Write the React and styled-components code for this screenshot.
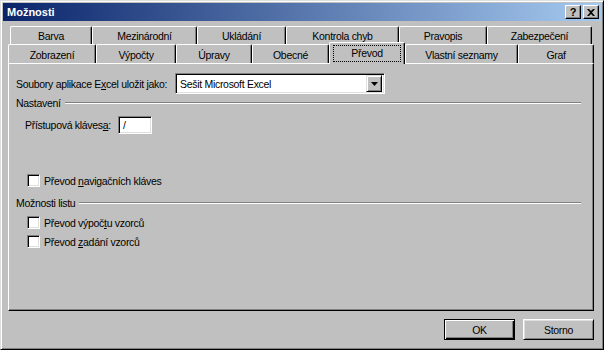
import React from 'react'
import styled, { createGlobalStyle } from 'styled-components'

const GlobalStyle = createGlobalStyle`
  html, body {
    margin: 0;
    padding: 0;
    width: 604px;
    height: 350px;
    overflow: hidden;
    background: #c0c0c0;
  }
  * { box-sizing: border-box; }
`

const Window = styled.div`
  width: 604px;
  height: 350px;
  display: flex;
  flex-direction: column;
  background: #c0c0c0;
  border: 1px solid;
  border-color: #dfdfdf #000 #000 #dfdfdf;
  box-shadow: inset 1px 1px #fff, inset -1px -1px #808080;
  padding: 1px;
  font-family: Tahoma, "Liberation Sans", Arial, sans-serif;
  font-size: 10.5px;
  letter-spacing: -0.3px;
  color: #000;
`

const TitleBar = styled.div`
  height: 18px;
  margin: 1px 1px 0 1px;
  display: flex;
  align-items: center;
  justify-content: space-between;
  padding: 0 2px 0 4px;
  background: linear-gradient(to right, #0a246a, #a6caf0);
  color: #fff;
  font-weight: bold;
  font-size: 11px;
  letter-spacing: 0;
`

const TitleButtons = styled.div`
  display: flex;
  gap: 2px;
`

const TitleButton = styled.div`
  width: 16px;
  height: 14px;
  background: #c0c0c0;
  border: 1px solid;
  border-color: #fff #000 #000 #fff;
  box-shadow: inset -1px -1px #808080;
  display: flex;
  align-items: center;
  justify-content: center;
  color: #000;
  font-weight: bold;
  font-size: 11px;
  line-height: 1;
`

const Body = styled.div`
  flex: 1;
  display: flex;
  flex-direction: column;
  padding: 5px 8px 8px 6px;
`

const TabRow = styled.div`
  display: flex;
  align-items: flex-end;
  height: ${p => p.$h}px;
  margin-left: ${p => p.$indent}px;
  position: relative;
  z-index: ${p => p.$front ? 2 : 1};
`

const Tab = styled.div`
  width: ${p => p.$w}px;
  height: ${p => p.$active ? p.$h + 3 : p.$h}px;
  margin-bottom: ${p => p.$active ? -1 : 0}px;
  position: relative;
  background: #c0c0c0;
  border-left: 1px solid #fff;
  border-top: 1px solid #fff;
  border-right: 1px solid #000;
  border-radius: 2px 2px 0 0;
  box-shadow: inset -1px 0 #808080;
  display: flex;
  align-items: center;
  justify-content: center;
  padding: ${p => p.$active ? '0 3px' : '2px 3px 0'};
  white-space: nowrap;
`

const TabLabel = styled.span`
  flex: ${p => p.$focus ? 1 : 'none'};
  text-align: center;
  line-height: 13px;
  padding: ${p => p.$focus ? '1px 2px' : '1px 3px'};
  border: ${p => p.$focus ? '1px dotted #000' : 'none'};
`

const Panel = styled.div`
  flex: 1;
  display: flex;
  flex-direction: column;
  border: 1px solid;
  border-color: #fff #000 #000 #fff;
  box-shadow: inset -1px -1px #808080;
  padding: 9px 8px 0 7px;
`

const FieldRow = styled.div`
  display: flex;
  align-items: center;
  margin-top: ${p => p.$mt || 0}px;
  padding-left: ${p => p.$indent || 0}px;
  height: ${p => p.$h}px;
`

const FieldLabel = styled.span`
  width: ${p => p.$w}px;
  white-space: nowrap;
`

const Sunken = styled.div`
  background: #fff;
  border: 1px solid;
  border-color: #808080 #fff #fff #808080;
  box-shadow: inset 1px 1px #000, inset -1px -1px #dfdfdf;
`

const Combo = styled(Sunken)`
  width: 210px;
  height: 21px;
  display: flex;
  align-items: center;
  padding: 2px;
`

const ComboText = styled.span`
  flex: 1;
  padding-left: 2px;
`

const ArrowButton = styled.div`
  width: 16px;
  height: 17px;
  background: #c0c0c0;
  border: 1px solid;
  border-color: #dfdfdf #000 #000 #dfdfdf;
  box-shadow: inset 1px 1px #fff, inset -1px -1px #808080;
  display: flex;
  align-items: center;
  justify-content: center;
`

const KeyInput = styled(Sunken)`
  width: 34px;
  height: 18px;
  padding: 0 4px;
  display: flex;
  align-items: center;
`

const GroupHeader = styled.div`
  display: flex;
  align-items: center;
  gap: 4px;
  height: 13px;
  margin-top: ${p => p.$mt}px;
  margin-right: 4px;
`

const GroupLine = styled.div`
  flex: 1;
  border-top: 1px solid #808080;
  border-bottom: 1px solid #fff;
`

const CheckRow = styled.label`
  display: flex;
  align-items: center;
  gap: 4px;
  height: 15px;
  margin-top: ${p => p.$mt}px;
  padding-left: 11px;
`

const CheckBox = styled(Sunken)`
  width: 13px;
  height: 13px;
`

const ButtonRow = styled.div`
  display: flex;
  justify-content: flex-end;
  gap: 8px;
  margin-top: 8px;
`

const Button = styled.div`
  width: 71px;
  height: 21px;
  display: flex;
  align-items: center;
  justify-content: center;
  background: #c0c0c0;
  border: 1px solid;
  border-color: ${p => p.$default ? '#000' : '#fff #000 #000 #fff'};
  box-shadow: ${p => p.$default
    ? 'inset 1px 1px #fff, inset -1px -1px #000, inset -2px -2px #808080'
    : 'inset 1px 1px #dfdfdf, inset -1px -1px #808080'};
`

const topTabs = [
  ['Barva', 82], ['Mezinárodní', 105], ['Ukládání', 89],
  ['Kontrola chyb', 113], ['Pravopis', 88], ['Zabezpečení', 105],
]

const frontTabs = [
  ['Zobrazení', 88], ['Výpočty', 80], ['Úpravy', 76], ['Obecné', 77],
  ['Převod', 76], ['Vlastní seznamy', 113], ['Graf', 76],
]

function CloseIcon() {
  return (
    <svg width="8" height="7" viewBox="0 0 8 7">
      <path d="M0 0h2l2 2 2-2h2L5 3.5 8 7H6L4 5 2 7H0l3-3.5z" fill="#000" />
    </svg>
  )
}

function DownArrow() {
  return (
    <svg width="7" height="4" viewBox="0 0 7 4">
      <path d="M0 0h7L3.5 4z" fill="#000" />
    </svg>
  )
}

export default function App() {
  const active = 'Převod'
  return (
    <>
      <GlobalStyle />
      <Window>
        <TitleBar>
          <span>Možnosti</span>
          <TitleButtons>
            <TitleButton>?</TitleButton>
            <TitleButton><CloseIcon /></TitleButton>
          </TitleButtons>
        </TitleBar>
        <Body>
          <TabRow $h={18} $indent={2}>
            {topTabs.map(([name, w]) => (
              <Tab key={name} $w={w} $h={18}><TabLabel>{name}</TabLabel></Tab>
            ))}
          </TabRow>
          <TabRow $h={19} $indent={0} $front>
            {frontTabs.map(([name, w]) => (
              <Tab key={name} $w={w} $h={19} $active={name === active}>
                <TabLabel $focus={name === active}>{name}</TabLabel>
              </Tab>
            ))}
          </TabRow>
          <Panel>
            <FieldRow $h={21}>
              <FieldLabel $w={159}>Soubory aplikace E<u>x</u>cel uložit jako:</FieldLabel>
              <Combo>
                <ComboText>Sešit Microsoft Excel</ComboText>
                <ArrowButton><DownArrow /></ArrowButton>
              </Combo>
            </FieldRow>

            <GroupHeader $mt={2}>
              <span>Nastavení</span>
              <GroupLine />
            </GroupHeader>

            <FieldRow $h={18} $mt={7} $indent={9}>
              <FieldLabel $w={93}>Přístupová kláves<u>a</u>:</FieldLabel>
              <KeyInput>/</KeyInput>
            </FieldRow>

            <CheckRow $mt={39}>
              <CheckBox />
              <span>Převod <u>n</u>avigačních kláves</span>
            </CheckRow>

            <GroupHeader $mt={8}>
              <span>Možnosti listu</span>
              <GroupLine />
            </GroupHeader>

            <CheckRow $mt={6}>
              <CheckBox />
              <span>Převod výpoč<u>t</u>u vzorců</span>
            </CheckRow>
            <CheckRow $mt={4}>
              <CheckBox />
              <span>Převod <u>z</u>adání vzorců</span>
            </CheckRow>
          </Panel>
          <ButtonRow>
            <Button $default>OK</Button>
            <Button>Storno</Button>
          </ButtonRow>
        </Body>
      </Window>
    </>
  )
}
